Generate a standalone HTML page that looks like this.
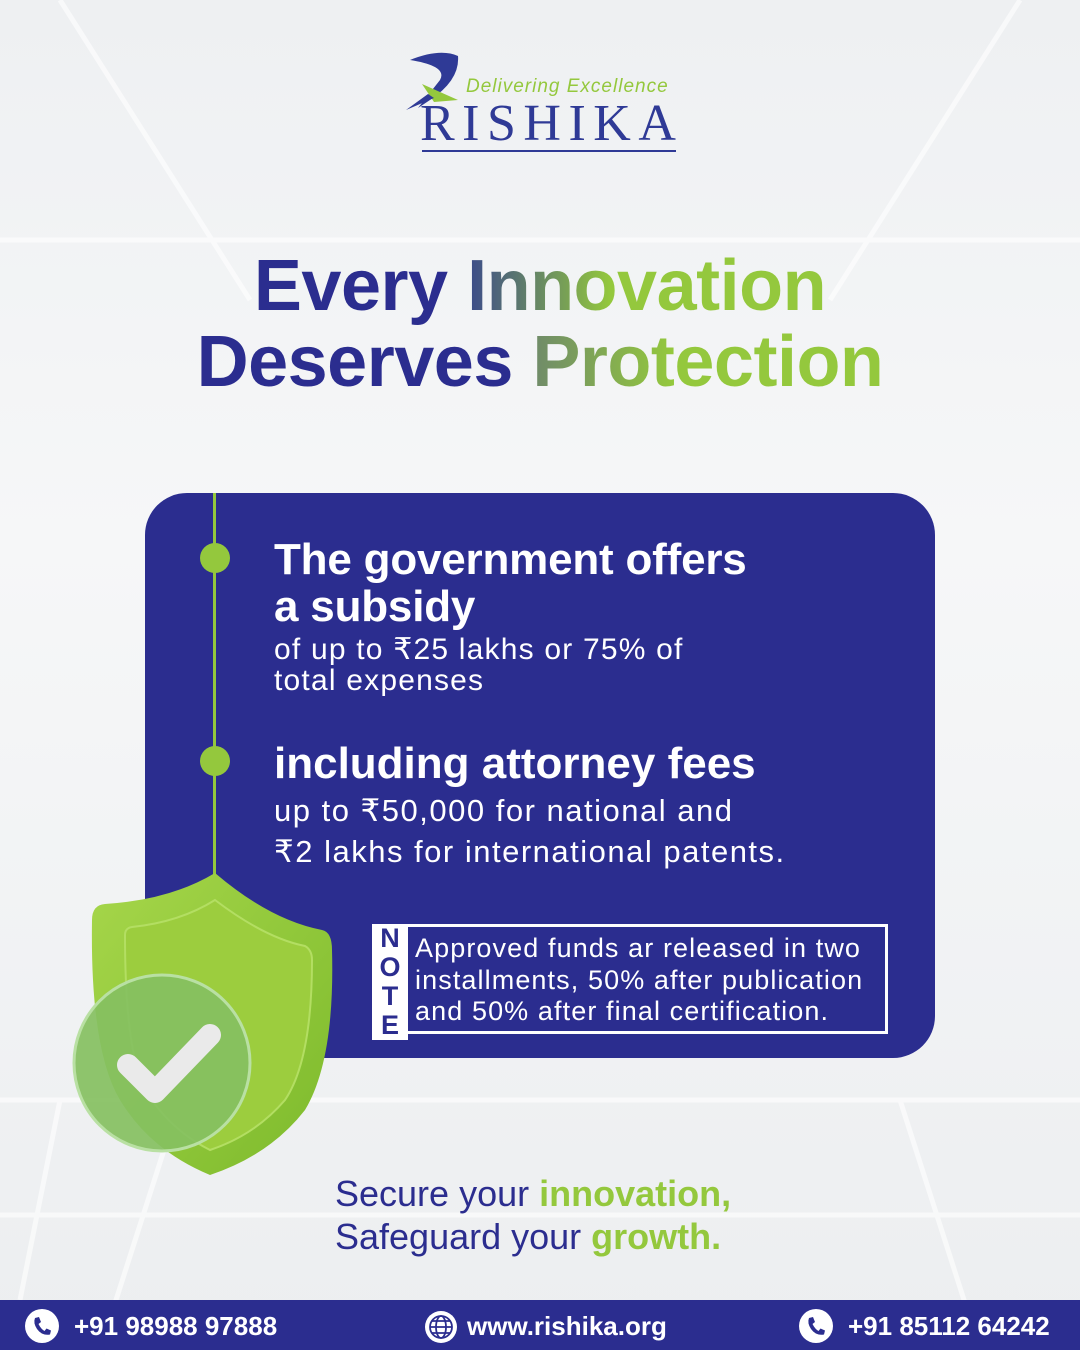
<!DOCTYPE html>
<html><head><meta charset="utf-8"><style>
*{margin:0;padding:0;box-sizing:border-box}
body{width:1080px;height:1350px;overflow:hidden;position:relative;font-family:"Liberation Sans",sans-serif;background:linear-gradient(#eef0f2,#f6f7f8 40%,#eceef0)}
.a{position:absolute}
.navy{color:#2b2d8f}.grn{color:#94c83d}
</style></head><body>
<svg class="a" style="left:0;top:0" width="1080" height="1350">
<g stroke="#ffffff" stroke-width="5" opacity=".6" fill="none">
<path d="M60 0 L250 300 M1020 0 L830 300 M0 240 L1080 240 M0 1100 L1080 1100 M0 1215 L1080 1215 M100 1350 L180 1100 M980 1350 L900 1100 M20 1300 L60 1100"/>
</g>
</svg>
<!-- logo -->
<svg class="a" style="left:400px;top:50px" width="80" height="70">
<path d="M10 10 Q40 -2 58 6 Q60 30 30 50 L18 58 L40 30 Q48 16 10 10Z" fill="#2f3a96"/>
<path d="M22 34 L58 50 L34 52Z" fill="#94c83d"/>
<path d="M34 48 L6 60 L28 44Z" fill="#2f3a96"/>
</svg>
<div class="a grn" style="left:466px;top:76px;font-size:19px;font-style:italic;letter-spacing:1px">Delivering Excellence</div>
<div class="a" style="left:420px;top:98px;font-family:'Liberation Serif',serif;font-size:52px;color:#2f3a96;letter-spacing:7.5px;line-height:52px">RISHIKA</div>
<div class="a" style="left:422px;top:150px;width:254px;height:2px;background:#2f3a96"></div>
<!-- headline -->
<div class="a" style="left:0;width:1080px;top:248px;text-align:center;font-weight:bold;font-size:72px;line-height:76px;letter-spacing:-0.5px">
<span class="navy">Every </span><span style="background:linear-gradient(90deg,#3b4a8a,#94c83d 40%);-webkit-background-clip:text;color:transparent">Innovation</span><br>
<span class="navy">Deserves </span><span style="background:linear-gradient(90deg,#6f8a6a,#94c83d 40%);-webkit-background-clip:text;color:transparent">Protection</span></div>
<!-- card -->
<div class="a" style="left:145px;top:493px;width:790px;height:565px;background:#2b2d8f;border-radius:42px"></div>
<div class="a" style="left:213px;top:493px;width:3px;height:385px;background:#94c83d"></div>
<div class="a" style="left:200px;top:543px;width:30px;height:30px;border-radius:50%;background:#94c83d"></div>
<div class="a" style="left:200px;top:746px;width:30px;height:30px;border-radius:50%;background:#94c83d"></div>
<div class="a" style="left:274px;top:536px;color:#fff;font-size:44px;line-height:47px;font-weight:bold;letter-spacing:-0.2px">The government offers<br>a subsidy</div>
<div class="a" style="left:274px;top:634px;color:#fff;font-size:30px;line-height:31px;letter-spacing:1.2px">of up to ₹25 lakhs or 75% of<br>total expenses</div>
<div class="a" style="left:274px;top:740px;color:#fff;font-size:44px;line-height:47px;font-weight:bold">including attorney fees</div>
<div class="a" style="left:274px;top:790px;color:#fff;font-size:31px;line-height:41px;letter-spacing:1.5px">up to ₹50,000 for national and<br>₹2 lakhs for international patents.</div>
<div class="a" style="left:372px;top:924px;width:516px;height:110px;border:3px solid #fff"></div>
<div class="a" style="left:372px;top:924px;width:36px;height:116px;background:#fff;color:#2b2d8f;font-weight:bold;font-size:27px;line-height:29px;text-align:center;padding-top:0">N<br>O<br>T<br>E</div>
<div class="a" style="left:415px;top:933px;color:#fff;font-size:27px;line-height:31.5px;letter-spacing:1.1px">Approved funds ar released in two<br>installments, 50% after publication<br>and 50% after final certification.</div>
<!-- shield -->
<svg class="a" style="left:60px;top:860px" width="290" height="330">
<defs><linearGradient id="g" x1="0" y1="0" x2="1" y2="1"><stop offset="0" stop-color="#a6d64a"/><stop offset="1" stop-color="#7dba2c"/></linearGradient></defs>
<path d="M155 13 Q210 60 262 70 Q272 72 272 90 Q275 200 245 250 Q210 295 150 315 Q90 290 60 240 Q30 190 32 60 Q32 45 45 44 Q110 40 155 13Z" fill="url(#g)"/>
<path d="M155 40 Q205 78 245 86 Q252 90 252 100 Q252 200 225 240 Q195 275 150 290 Q110 270 85 230 Q65 190 65 75 Q65 68 72 67 Q120 62 155 40Z" fill="#9ccd3e" stroke="#b3de62" stroke-width="2"/>
<circle cx="102" cy="203" r="88" fill="#86c061" opacity=".92"/>
<circle cx="102" cy="203" r="88" fill="none" stroke="#b9e0a3" stroke-width="3"/>
<path d="M68 205 L95 232 L150 175" stroke="#eaeaea" stroke-width="22" fill="none" stroke-linecap="round" stroke-linejoin="round"/>
</svg>
<!-- tagline -->
<div class="a" style="left:335px;top:1172px;font-size:36px;line-height:43px;font-weight:bold"><span class="navy" style="font-weight:normal">Secure your </span><span class="grn">innovation,</span><br><span class="navy" style="font-weight:normal">Safeguard your </span><span class="grn">growth.</span></div>
<!-- footer -->
<div class="a" style="left:0;top:1300px;width:1080px;height:50px;background:#2b2d8f"></div>
<svg class="a" style="left:25px;top:1309px" width="34" height="34"><circle cx="17" cy="17" r="17" fill="#fff"/><path d="M10 9 L14 8 L16 13 L13.5 15 Q16 20 19.5 22 L21.5 19.5 L26 21.5 L25 25.5 Q17 27 12 20 Q8 14 10 9Z" fill="#2b2d8f"/></svg>
<div class="a" style="left:74px;top:1311px;color:#fff;font-size:26px;font-weight:bold">+91 98988 97888</div>
<svg class="a" style="left:425px;top:1311px" width="32" height="32"><circle cx="16" cy="16" r="16" fill="#fff"/><g stroke="#2b2d8f" stroke-width="1.8" fill="none"><circle cx="16" cy="16" r="11"/><ellipse cx="16" cy="16" rx="5" ry="11"/><path d="M5 16H27M7 10H25M7 22H25"/></g></svg>
<div class="a" style="left:467px;top:1311px;color:#fff;font-size:26px;font-weight:bold">www.rishika.org</div>
<svg class="a" style="left:799px;top:1309px" width="34" height="34"><circle cx="17" cy="17" r="17" fill="#fff"/><path d="M10 9 L14 8 L16 13 L13.5 15 Q16 20 19.5 22 L21.5 19.5 L26 21.5 L25 25.5 Q17 27 12 20 Q8 14 10 9Z" fill="#2b2d8f"/></svg>
<div class="a" style="left:848px;top:1311px;color:#fff;font-size:26px;font-weight:bold">+91 85112 64242</div>
</body></html>
